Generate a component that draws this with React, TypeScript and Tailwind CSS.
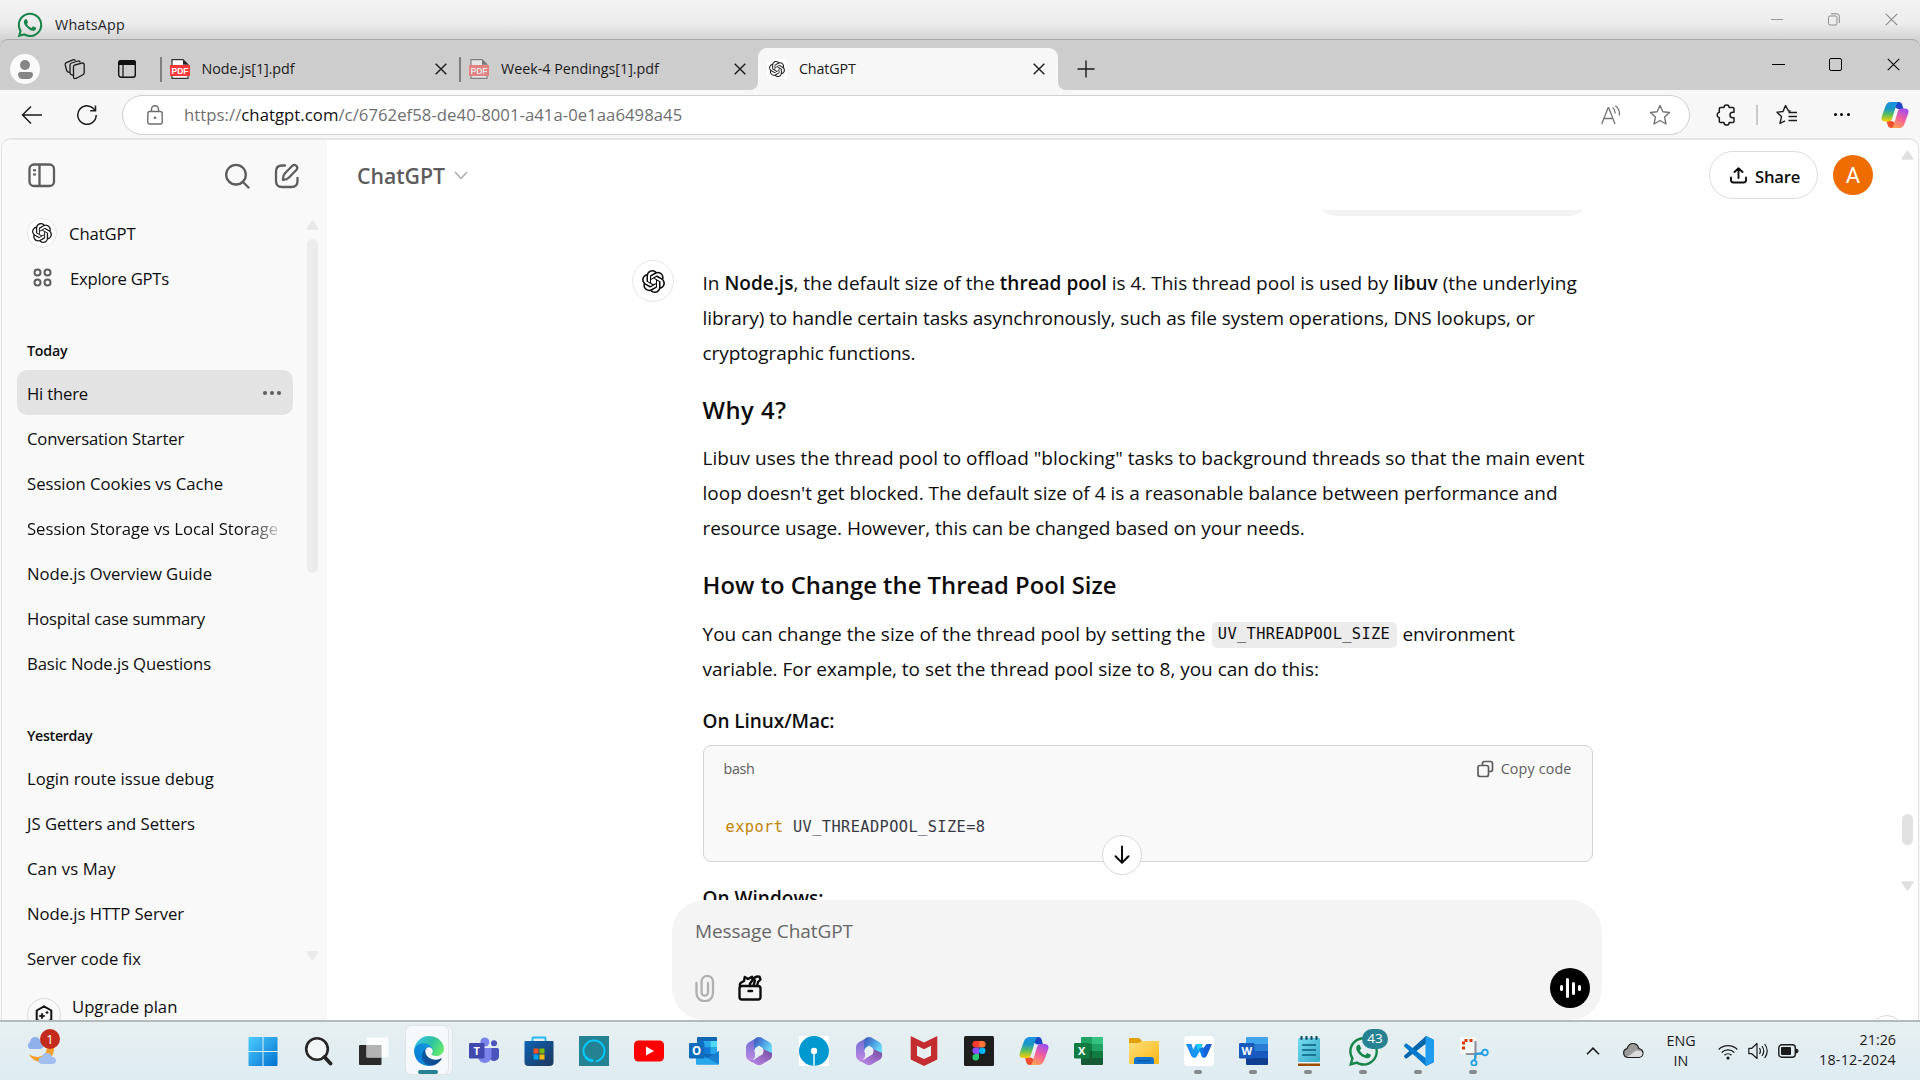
import type { ReactNode } from "react";
import { SiOpenai } from "react-icons/si";
import { FaWhatsapp } from "react-icons/fa";

/* Text run on one line */
function T({ c = "", children }: { c?: string; children: ReactNode }) {
  return <span className={"inline-block whitespace-nowrap " + c}>{children}</span>;
}

function Close({ c = "", s = 1 }: { c?: string; s?: number }) {
  return (
    <svg viewBox="0 0 12 12" className={"shrink-0 " + c} fill="none" stroke="currentColor" strokeWidth={s}>
      <path d="M.7.7l10.6 10.6M11.3.7L.7 11.3" />
    </svg>
  );
}

function Pdf({ c = "" }: { c?: string }) {
  return (
    <svg width="20" height="20" viewBox="0 0 20 20" className={"shrink-0 " + c}>
      <path d="M2 .7h11l5 5v13.6H2z" fill="#fff" stroke="#333" strokeWidth="1.2" />
      <path d="M13 .7v5h5z" fill="#222" />
      <rect x="0" y="6" width="20" height="11" fill="#fb3838" />
      <text x="10" y="14.600" fontSize="8.500" fontWeight="700" fill="#fff" textAnchor="middle" fontFamily="Liberation Sans, sans-serif">PDF</text>
    </svg>
  );
}

function Copilot({ id, size }: { id: string; size: number }) {
  return (
    <svg width={size} height={size} viewBox="0 0 30 30" className="shrink-0">
      <defs>
        <linearGradient id={id + "a"} x1="0" y1="0" x2="0" y2="1">
          <stop offset="0" stopColor="#1c8fe0" />
          <stop offset=".35" stopColor="#1899c8" />
          <stop offset=".65" stopColor="#5fbf5a" />
          <stop offset="1" stopColor="#ffd000" />
        </linearGradient>
        <linearGradient id={id + "b"} x1=".7" y1="0" x2=".3" y2="1">
          <stop offset="0" stopColor="#a04cf0" />
          <stop offset=".5" stopColor="#f4609c" />
          <stop offset="1" stopColor="#ffa052" />
        </linearGradient>
      </defs>
      <path d="M12 1h7.500q2.500 0 3.300 3l1.200 4.500h-6L14 6z" fill="#1d49c9" />
      <path d="M18 29h-7.500q-2.500 0-3.300-3L6 21.500h6L16 24z" fill="#f0502f" />
      <path d="M19 1h-8.500C7.300 1 5.600 3.200 4.700 6L.9 16.600C-.4 20.400 1.500 22 4.400 22h3.700c2.100 0 3.300-1.300 4-3.400l3.900-13C16.800 3 17.300 1.400 19 1z" fill={`url(#${id}a)`} />
      <path d="M11 29h8.500c3.200 0 4.900-2.200 5.800-5l3.800-10.600C30.400 9.600 28.500 8 25.600 8h-3.700c-2.100 0-3.300 1.300-4 3.400l-3.900 13c-.8 2.600-1.300 4.200-3 4.600z" fill={`url(#${id}b)`} />
    </svg>
  );
}

function WindowsLogo() {
  return (
    <svg width="30" height="30" viewBox="0 0 30 30" className="relative left-[-1px]">
      <defs>
        <linearGradient id="wn" gradientUnits="userSpaceOnUse" x1="0" y1="0" x2="30" y2="30">
          <stop offset="0" stopColor="#4fd0ff" />
          <stop offset="1" stopColor="#006fd0" />
        </linearGradient>
      </defs>
      <path d="M.5 2q0-1 1-1h13v14H.5zM15.500 1h13q1 0 1 1v13h-14zM.5 16h14v14h-13q-1 0-1-1zM15.500 16h14v13q0 1-1 1h-13z" fill="url(#wn)" />
    </svg>
  );
}
function SearchTask() {
  return (
    <svg width="30" height="30" viewBox="0 0 30 30" fill="none" stroke="#262626">
      <circle cx="13" cy="13" r="10.800" strokeWidth="2.600" fill="#f3f6f7" />
      <path d="M20.500 21l6 6.500" strokeWidth="3.800" strokeLinecap="round" />
    </svg>
  );
}
function TaskView() {
  return (
    <svg width="30" height="30" viewBox="0 0 30 30">
      <rect x="0" y="9" width="22.500" height="20" rx="1" fill="#2a2a2a" />
      <rect x="7.500" y="1.500" width="22" height="20" rx="1" fill="#fff" opacity=".85" />
      <rect x="7.500" y="9" width="15" height="12.500" fill="#b3b3b3" />
    </svg>
  );
}
function EdgeLogo() {
  return (
    <svg width="30" height="30" viewBox="4 4 257 257">
      <defs>
        <linearGradient id="e1" x1="0" y1="0" x2="1" y2="0"><stop offset="0" stopColor="#0c59a4" /><stop offset="1" stopColor="#114a8b" /></linearGradient>
        <linearGradient id="e2" x1="1" y1="0" x2="0" y2="1"><stop offset="0" stopColor="#1b9de2" /><stop offset="1" stopColor="#0078d4" /></linearGradient>
        <linearGradient id="e3" x1="0" y1=".2" x2="1" y2=".6"><stop offset="0" stopColor="#35c1f1" /><stop offset=".55" stopColor="#2dc3a0" /><stop offset="1" stopColor="#66eb6e" /></linearGradient>
      </defs>
      <path d="M235.680 195.460a93.730 93.730 0 01-10.540 4.710 101.870 101.870 0 01-35.900 6.460c-47.320 0-88.540-32.550-88.540-74.320A31.480 31.480 0 01117.130 105c-42.800 1.800-53.800 46.400-53.800 72.530 0 73.880 68.090 81.370 82.760 81.370 7.910 0 19.840-2.300 27-4.560l1.310-.44A128.340 128.340 0 00241.020 201.100a4 4 0 00-5.340-5.640z" fill="url(#e1)" />
      <path d="M110.340 246.340A79.200 79.200 0 0187.600 225a80.720 80.720 0 0129.530-120c3.120-1.470 8.450-4.130 15.540-4a32.350 32.350 0 0125.690 13 31.880 31.880 0 016.360 18.660c0-.21 24.460-79.600-80-79.600-43.900 0-80 41.660-80 78.210a130.150 130.150 0 0012.110 56 128 128 0 00156.380 67.110 75.550 75.550 0 01-62.780-8z" fill="url(#e2)" />
      <path d="M156.940 153.780c-.81 1.050-3.300 2.500-3.300 5.660 0 2.610 1.700 5.120 4.720 7.230 14.380 10 41.490 8.680 41.560 8.680a59.560 59.560 0 0030.270-8.350 61.380 61.380 0 0030.430-52.880c.26-22.410-8-37.310-11.340-43.910-21.190-41.450-66.930-65.290-116.670-65.290a128 128 0 00-128 126.200c.48-36.540 36.800-66.050 80-66.050 3.500 0 23.460.34 42 10.070 16.340 8.580 24.900 18.940 30.850 29.210 6.180 10.670 7.280 24.150 7.280 29.520s-2.740 13.330-7.800 19.910z" fill="url(#e3)" />
    </svg>
  );
}
function Teams() {
  return (
    <svg width="30" height="30" viewBox="0 0 30 30">
      <circle cx="25" cy="7.200" r="3" fill="#4b53bc" />
      <path d="M20 12h8.500q1.500 0 1.500 1.500V20a5 5 0 0 1-9 3z" fill="#4b53bc" />
      <circle cx="15.800" cy="6" r="4.500" fill="#7b83eb" />
      <path d="M9 12h13.500V21a6.800 6.800 0 0 1-13.500 0z" fill="#7b83eb" />
      <rect x="0" y="7" width="15.500" height="15.500" rx="1.300" fill="#4149b0" />
      <text x="7.700" y="18.600" fontSize="11" fontWeight="700" fill="#fff" textAnchor="middle" fontFamily="Open Sans, sans-serif">T</text>
    </svg>
  );
}
function Store() {
  return (
    <svg width="30" height="30" viewBox="0 0 30 30">
      <defs><linearGradient id="st" x1="0" y1="0" x2="1" y2="1"><stop offset="0" stopColor="#0c63b4" /><stop offset="1" stopColor="#1f355c" /></linearGradient></defs>
      <path d="M8.500 6V2q0-.5.500-.5h12q.5 0 .5.500v4" fill="none" stroke="#22b8f0" strokeWidth="1.800" />
      <path d="M.5 6q0-1 1-1h27q1 0 1 1v20q0 4-4 4h-21q-4 0-4-4z" fill="url(#st)" />
      <path d="M9.500 12.500h5v5h-5z" fill="#f25022" /><path d="M15.500 12.500h5v5h-5z" fill="#7fba00" />
      <path d="M9.500 18.500h5v5h-5z" fill="#00a4ef" /><path d="M15.500 18.500h5v5h-5z" fill="#ffb900" />
    </svg>
  );
}
function Alexa() {
  return (
    <svg width="30" height="30" viewBox="0 0 30 30">
      <rect width="30" height="30" fill="#258292" />
      <path d="M13.200 25.300a10.500 10.500 0 1 1 3.600 0" fill="none" stroke="#00caff" strokeWidth="2" />
      <path d="M5 17.500q2 5.500 8.600 6.500v2" fill="none" stroke="#00caff" strokeWidth="1.400" />
    </svg>
  );
}
function YouTube() {
  return (
    <svg width="30" height="30" viewBox="0 0 30 30">
      <rect x="0" y="4.500" width="30" height="21" rx="4.500" fill="#f00" />
      <path d="M12 10.500v9l8-4.500z" fill="#fff" />
    </svg>
  );
}
function Outlook() {
  return (
    <svg width="30" height="30" viewBox="0 0 30 30">
      <rect x="8" y="1" width="20" height="22" rx="1" fill="#1066b5" />
      <path d="M8 5h6.700v6.500H8z" fill="#1474c4" /><path d="M14.700 5h6.700v6.500h-6.700z" fill="#28a8ea" /><path d="M21.400 5H28v6.500h-6.600z" fill="#50d9ff" />
      <path d="M14.700 11.500h6.700V18h-6.700z" fill="#0f78d4" /><path d="M21.400 11.500H28V18h-6.600z" fill="#28a8ea" />
      <path d="M7 16l12 6 11-7v12.500q0 1-1 1H8q-1 0-1-1z" fill="#1490df" />
      <path d="M19 22l11 6.500V15z" fill="#1a7fce" />
      <path d="M7 22l12 .5 10.500 6H8q-1 0-1-1z" fill="#28a8ea" />
      <rect x="0" y="7" width="15.500" height="15.500" rx="1.300" fill="#0f6cbd" />
      <text x="7.700" y="18.700" fontSize="11.500" fontWeight="700" fill="#fff" textAnchor="middle" fontFamily="Open Sans, sans-serif">O</text>
    </svg>
  );
}
function M365({ id }: { id: string }) {
  return (
    <svg width="30" height="30" viewBox="0 0 30 30">
      <defs>
        <linearGradient id={id + "1"} x1="0" y1="0" x2="0" y2="1"><stop offset="0" stopColor="#6a6fd0" /><stop offset="1" stopColor="#c48ae6" /></linearGradient>
        <linearGradient id={id + "2"} x1="0" y1="0" x2="1" y2=".6"><stop offset="0" stopColor="#4053b4" /><stop offset=".5" stopColor="#4a93e0" /><stop offset="1" stopColor="#6adcf8" /></linearGradient>
        <linearGradient id={id + "3"} x1="0" y1="1" x2="1" y2="0"><stop offset="0" stopColor="#c18df0" /><stop offset="1" stopColor="#74499f" /></linearGradient>
      </defs>
      <path d="M12 2.200L4.500 6.500Q2 8 2 11v9q0 2.500 2 3.700L7.500 26 11 21V11z" fill={`url(#${id}1)`} />
      <path d="M12.500 1.600q2.500-1.300 5 0l8 4.600Q28 7.800 28 10.500V18l-9-5-4-3.500L10 14V6q0-3 2.500-4.400z" fill={`url(#${id}2)`} />
      <path d="M19 13l9 4v3q0 2.300-2 3.500l-8.500 5q-2.500 1.300-5 0L4 23.700q4.500 1.500 7.500-1L18.500 18z" fill={`url(#${id}3)`} />
      <circle cx="15" cy="15" r="4.600" fill="#e6eff3" />
    </svg>
  );
}
function Sbi() {
  return (
    <svg width="30" height="30" viewBox="0 0 30 30">
      <rect width="30" height="30" fill="#fff" />
      <circle cx="15" cy="15" r="15" fill="#0099cf" />
      <circle cx="15" cy="15" r="3.200" fill="#fff" />
      <path d="M14.300 15h1.400v15h-1.400z" fill="#fff" />
    </svg>
  );
}
function McAfee() {
  return (
    <svg width="30" height="30" viewBox="0 0 30 30">
      <path d="M1.700 0L15 6.500 28.300 0v23.500L15 30 1.700 23.500z" fill="#c42d2f" />
      <path d="M8 9.800l7 3.500 7-3.500v10L15 23l-7-3.300z" fill="#e8eff1" />
    </svg>
  );
}
function Figma() {
  return (
    <svg width="30" height="30" viewBox="0 0 30 30">
      <rect width="30" height="30" rx="1.500" fill="#1e1e1e" />
      <path d="M15 5h-3.300a3.250 3.250 0 0 0 0 6.500H15z" fill="#ff3b30" />
      <path d="M15 5h3.300a3.250 3.250 0 0 1 0 6.500H15z" fill="#ff7237" />
      <path d="M15 11.500h-3.300a3.250 3.250 0 0 0 0 6.500H15z" fill="#874fff" />
      <circle cx="18.250" cy="14.800" r="3.250" fill="#00b6ff" />
      <path d="M15 18h-3.300A3.250 3.250 0 1 0 15 21.300z" fill="#24cb71" />
    </svg>
  );
}
function Word() {
  return (
    <svg width="30" height="30" viewBox="0 0 30 30">
      <path d="M7 2q0-1 1-1h20q1 0 1 1v6H7z" fill="#41a5ee" />
      <path d="M7 8h22v7H7z" fill="#2b7cd3" />
      <path d="M7 15h22v7H7z" fill="#185abd" />
      <path d="M7 22h22v6q0 1-1 1H8q-1 0-1-1z" fill="#103f91" />
      <rect x="0" y="7" width="15.500" height="15.500" rx="1.300" fill="#185abd" />
      <text x="7.700" y="18.600" fontSize="11" fontWeight="700" fill="#fff" textAnchor="middle" fontFamily="Open Sans, sans-serif">W</text>
    </svg>
  );
}
function Excel() {
  return (
    <svg width="30" height="30" viewBox="0 0 30 30">
      <path d="M7 2q0-1 1-1h10v7H7z" fill="#21a366" /><path d="M18 1h10q1 0 1 1v6H18z" fill="#33c481" />
      <path d="M7 8h11v7H7z" fill="#107c41" /><path d="M18 8h11v7H18z" fill="#21a366" />
      <path d="M7 15h11v7H7z" fill="#185c37" /><path d="M18 15h11v7H18z" fill="#107c41" />
      <path d="M7 22h22v6q0 1-1 1H8q-1 0-1-1z" fill="#185c37" />
      <rect x="0" y="7" width="15.500" height="15.500" rx="1.300" fill="#107c41" />
      <text x="7.700" y="18.600" fontSize="11" fontWeight="700" fill="#fff" textAnchor="middle" fontFamily="Open Sans, sans-serif">X</text>
    </svg>
  );
}
function Explorer() {
  return (
    <svg width="30" height="30" viewBox="0 0 30 30">
      <defs><linearGradient id="fx" x1="0" y1="0" x2="1" y2="1"><stop offset="0" stopColor="#ffe07a" /><stop offset="1" stopColor="#fcb714" /></linearGradient></defs>
      <path d="M0 3q0-1 1-1h8.500q.7 0 1.200.5L13 5h15q1.500 0 1.500 1.500V12H0z" fill="#e0a10c" />
      <path d="M0 8q0-1 1-1h9l3-2h16q1 0 1 1v21q0 1-1 1H1q-1 0-1-1z" fill="url(#fx)" />
      <path d="M5 28v-4q0-3 3-3h14q3 0 3 3v4z" fill="#1273cc" />
      <path d="M8.500 24.800h13" stroke="#0a4d9b" strokeWidth="1" />
    </svg>
  );
}
function WShare() {
  return (
    <svg width="30" height="30" viewBox="0 0 30 30">
      <rect width="30" height="30" rx="4" fill="#fff" />
      <path d="M2 8h5.500l4 13.500H9.500q-1.700 0-2.300-1.700z" fill="#1d8ef5" />
      <path d="M8.500 15L12 8h6.500l-2.500 7-4 6.500H9.500z" fill="#1696f5" />
      <path d="M12 8h6.500l-1.500 5.500-3 1.500z" fill="#1fc8ff" />
      <path d="M28 8h-5.500l-5 6.500 1.500 7h1.500q1.700 0 2.300-1.700z" fill="#1760d8" />
      <path d="M15 13l4-2 1.500 10.500h-1q-1.500 0-2-1.500z" fill="#0b78e8" />
    </svg>
  );
}
function Notepad() {
  return (
    <svg width="30" height="30" viewBox="0 0 30 30">
      <defs><linearGradient id="np" x1="0" y1="0" x2="1" y2="1"><stop offset="0" stopColor="#74dcf2" /><stop offset="1" stopColor="#37a9c6" /></linearGradient></defs>
      <rect x="4" y="26" width="22" height="4" fill="#9a4d00" />
      <rect x="4" y="25" width="22" height="2.500" fill="#f4f4f4" />
      <rect x="4" y="2" width="22" height="24" rx="1" fill="url(#np)" />
      <path d="M8 9h14M8 14h14M8 19h14" stroke="#0b5f7d" strokeWidth="1.500" />
      <path d="M7.500 1v2M12.500 1v2M17.500 1v2M22.500 1v2" stroke="#134a60" strokeWidth="2.200" strokeLinecap="round" />
    </svg>
  );
}
function VsCode() {
  return (
    <svg width="30" height="30" viewBox="0 0 30 30">
      <path d="M22 0l6.800 3.200q1.200.6 1.200 2v4L21.500 8 3 22.300q-.8.600-1.600-.1L.3 21q-.7-.8 0-1.600z" fill="#0065a9" />
      <path d="M22 30l6.800-3.200q1.200-.6 1.200-2v-4L21.500 22 3 7.700q-.8-.6-1.600.1L.3 9q-.7.800 0 1.600z" fill="#007acc" />
      <path d="M22 0l6.800 3.200q1.200.6 1.200 2v19.600q0 1.400-1.200 2L22 30q-1 0-.5-1V1q-.500-1 .5-1z" fill="#1f9cf0" />
    </svg>
  );
}
function Snip() {
  return (
    <svg width="30" height="30" viewBox="0 0 30 30">
      <rect x="1" y="1" width="17" height="17" rx="2" fill="#fff" opacity=".6" />
      <path d="M13.500 4.500H4.500V14.500" fill="none" stroke="#d83b01" strokeWidth="3" strokeDasharray="3 2" />
      <path d="M16.500 5v18M7 18h16" stroke="#8f9499" strokeWidth="2.200" />
      <circle cx="26" cy="16.500" r="2.800" fill="none" stroke="#1ea0ea" strokeWidth="1.800" />
      <circle cx="15" cy="27" r="2.600" fill="none" stroke="#1ea0ea" strokeWidth="1.800" />
      <path d="M16 18l7.500-1M16.500 18l-1 6.500" stroke="#1ea0ea" strokeWidth="1.800" />
    </svg>
  );
}

const apps: { icon: ReactNode; open?: boolean; active?: boolean; badge?: string }[] = [
  { icon: <WindowsLogo /> },
  { icon: <SearchTask /> },
  { icon: <TaskView /> },
  { icon: <EdgeLogo />, active: true },
  { icon: <Teams /> },
  { icon: <Store /> },
  { icon: <Alexa /> },
  { icon: <YouTube /> },
  { icon: <Outlook /> },
  { icon: <M365 id="m" /> },
  { icon: <Sbi /> },
  { icon: <M365 id="n" /> },
  { icon: <McAfee /> },
  { icon: <Figma /> },
  { icon: <Copilot id="ct" size={30} /> },
  { icon: <Excel /> },
  { icon: <Explorer /> },
  { icon: <WShare />, open: true },
  { icon: <Word />, open: true },
  { icon: <Notepad />, open: true },
  { icon: <FaWhatsapp size={33} color="#15854a" />, open: true, badge: "43" },
  { icon: <VsCode />, open: true },
  { icon: <Snip />, open: true },
];

const today: [string, string][] = [
  ["Hi there", "tracking-[-0.2px]"],
  ["Conversation Starter", "tracking-[-0.18px]"],
  ["Session Cookies vs Cache", "tracking-[-0.02px]"],
  ["Session Storage vs Local Storage", "tracking-[-0.03px] bg-linear-to-r from-[#0d0d0d] from-88% to-[#cfcfcf] bg-clip-text text-transparent"],
  ["Node.js Overview Guide", "tracking-[-0.04px]"],
  ["Hospital case summary", "tracking-[-0.14px]"],
  ["Basic Node.js Questions", "tracking-[-0.11px]"],
];
const yesterday: [string, string][] = [
  ["Login route issue debug", "tracking-[0.02px]"],
  ["JS Getters and Setters", "tracking-[-0.02px]"],
  ["Can vs May", "tracking-[0.1px]"],
  ["Node.js HTTP Server", "tracking-[-0.05px]"],
  ["Server code fix", "tracking-[-0.05px]"],
];

function Triangle({ down, c = "" }: { down?: boolean; c?: string }) {
  return (
    <svg width="13" height="10" viewBox="0 0 13 10" className={c + (down ? " rotate-180" : "")}>
      <path d="M1.500 8.800L6.500 1.500l5 7.300z" fill="currentColor" stroke="currentColor" strokeWidth="2" strokeLinejoin="round" />
    </svg>
  );
}

function TitleBar() {
  return (
    <div className="flex h-[39px] items-center bg-linear-to-b from-[#f3f3f3] via-[#ececec] via-60% to-[#d4d4d4] pt-[10px]">
      <FaWhatsapp size={28} color="#15854a" className="ml-[16px] shrink-0" />
      <T c="ml-[11px] mt-px text-[14.3px] tracking-[0.2px] text-[#1f1f1f]">WhatsApp</T>
      <div className="ml-auto mr-[22px] mt-[-10px] flex items-center text-[#8b8b8b]">
        <div className="h-px w-3 bg-[#9a9a9a]" />
        <svg width="12" height="13" viewBox="0 0 12 13" className="ml-[45px]" fill="none" stroke="currentColor">
          <rect x=".5" y="3" width="8.500" height="9" rx="1.500" />
          <path d="M3 .8h6q2.300 0 2.300 2.300V10" />
        </svg>
        <Close c="ml-[45px] size-[13px]" />
      </div>
    </div>
  );
}

function TabStrip() {
  return (
    <div className="flex h-[51px] items-center rounded-t-[8px] border-t border-[#a9a9a9] bg-[#cdcdcd] pt-[8px] text-[14.3px] text-[#1b1b1b]">
      <div className="ml-[10px] flex size-[30px] flex-col items-center justify-center gap-[2px] rounded-full bg-[#fafafa]">
        <div className="size-[10px] rounded-full bg-[#868686]" />
        <div className="h-[7px] w-[15px] rounded-[4px_4px_7px_7px] bg-[#868686]" />
      </div>
      <svg width="22" height="22" viewBox="0 0 22 22" className="ml-[24px]" fill="none" stroke="#1b1b1b" strokeWidth="1.300" strokeLinejoin="round">
        <path d="M9.500 8.700q0-1.300 1.300-1.700l7-1.900q2-.4 2.400 1.400v8.200q0 1.500-1.300 2l-6.400 3.500q-3 1.200-3-1.200z" />
        <path d="M9.500 17.500l-1.500-.6q-2-.7-2-2.200V7.200Q6 5.500 7.600 5L14 3q1.700-.3 2.300 1.500" />
        <path d="M6 14.700l-1.500-.5q-1.500-.6-1.900-2L1.200 6.900Q1 5.300 2.300 4.700L9 1.800q1.500-.500 2.500.8" />
      </svg>
      <svg width="20" height="20" viewBox="0 0 20 20" className="ml-[31px]">
        <rect x="1.700" y="1.700" width="16.600" height="16.600" rx="2.500" fill="none" stroke="#111" strokeWidth="1.400" />
        <path d="M1 3.500Q1 1 3.500 1h13Q19 1 19 3.500V6H1z" fill="#111" />
        <path d="M6 6v12" stroke="#111" strokeWidth="1.200" />
      </svg>
      <div className="ml-[23px] h-[25px] w-[1.5px] bg-[#7f7f7f]" />
      <Pdf c="ml-[8px]" />
      <T c="ml-[12px] tracking-[-0.07px]">Node.js[1].pdf</T>
      <div className="flex w-[153px] justify-end"><Close s={1.400} c="size-[12px]" /></div>
      <div className="ml-[12px] h-[25px] w-[1.5px] bg-[#7f7f7f]" />
      <Pdf c="ml-[8px] opacity-50" />
      <T c="ml-[12px]">Week-4 Pendings[1].pdf</T>
      <div className="flex w-[87px] justify-end"><Close s={1.400} c="size-[12px]" /></div>
      <div className="relative ml-[12px] flex h-[42px] w-[300px] items-center rounded-t-[9px] bg-[#f7f7f7]">
        <svg width="8" height="8" viewBox="0 0 8 8" className="absolute bottom-0 left-[-8px]"><path d="M8 0v8H0a8 8 0 0 0 8-8z" fill="#f7f7f7" /></svg>
        <svg width="8" height="8" viewBox="0 0 8 8" className="absolute bottom-0 right-[-8px]"><path d="M0 0v8h8a8 8 0 0 1-8-8z" fill="#f7f7f7" /></svg>
        <div className="ml-[9px] flex size-[20px] items-center justify-center rounded-[4px] bg-white"><SiOpenai size={16} color="#222" /></div>
        <T c="ml-[12px] tracking-[-0.1px]">ChatGPT</T>
        <Close s={1.400} c="ml-auto mr-[13px] size-[12px]" />
      </div>
      <svg width="18" height="18" viewBox="0 0 18 18" className="ml-[19px]" stroke="#1b1b1b" strokeWidth="1.400"><path d="M9 .5v17M.5 9h17" /></svg>
      <div className="ml-auto mr-[20px] mt-[-9px] flex items-center text-black">
        <div className="h-[1.5px] w-[13px] bg-black" />
        <div className="ml-[44px] size-[13px] rounded-[2px] border-[1.3px] border-black" />
        <Close c="ml-[45px] size-[13px]" />
      </div>
    </div>
  );
}

function Toolbar() {
  return (
    <div className="flex h-[49px] items-center bg-[#f7f7f7] text-[#1b1b1b]">
      <svg width="22" height="20" viewBox="0 0 22 20" className="ml-[21px]" fill="none" stroke="currentColor" strokeWidth="1.500"><path d="M21 10H1.500M10 1.500L1.500 10l8.500 8.500" /></svg>
      <svg width="22" height="22" viewBox="0 0 22 22" className="ml-[33px]" fill="none" stroke="currentColor" strokeWidth="1.500"><path d="M19 6.500A9.200 9.200 0 1 0 20.200 11M19.500 1.500v5.300h-5.300" /></svg>
      <div className="ml-[24px] flex h-[40px] w-[1568px] items-center rounded-full border border-[#cfcfcf] bg-white">
        <svg width="16" height="20" viewBox="0 0 16 20" className="ml-[24px]" fill="none" stroke="#6e6e6e" strokeWidth="1.400">
          <rect x=".8" y="6.500" width="14.400" height="12.500" rx="2" />
          <path d="M4.500 6.500V4.300a3.500 3.500 0 0 1 7 0v2.200" />
          <circle cx="8" cy="12.800" r="1.300" fill="#6e6e6e" stroke="none" />
        </svg>
        <T c="ml-[21px] text-[16.7px] tracking-[0.05px] text-[#6f6f6f]">
          https://<span className="text-[#101010]">chatgpt.com</span>/c/6762ef58-de40-8001-a41a-0e1aa6498a45
        </T>
        <div className="ml-auto mr-[18px] flex items-center">
          <svg width="20" height="20" viewBox="0 0 20 20" fill="none" stroke="#757575" strokeWidth="1.300">
            <path d="M.7 19L7 3h.8L14 19M3 13.500h9M11.500 2.500q3 2 2.500 6M14.300.7q5 3.800 4 9.800" />
          </svg>
          <svg width="22" height="22" viewBox="0 0 22 22" className="ml-[28px]" fill="none" stroke="#757575" strokeWidth="1.400" strokeLinejoin="round">
            <path d="M11 1.500l2.900 6.200 6.700.8-5 4.600 1.400 6.900-6-3.500L5 20l1.400-6.900-5-4.600 6.700-.8z" />
          </svg>
        </div>
      </div>
      <svg width="22" height="24" viewBox="0 0 22 24" className="ml-[26px]" fill="none" stroke="currentColor" strokeWidth="1.500" strokeLinejoin="round">
        <path d="M4.500 4.500H8a2.600 2.600 0 0 1 5.200 0h3.600q1.200 0 1.200 1.200v3.500h-1.200a2.800 2.800 0 0 0 0 5.600H18v3.500q0 1.200-1.200 1.200h-3.600a2.600 2.600 0 0 1-5.200 0H4.500q-1.200 0-1.200-1.200v-3.500a2.900 2.900 0 0 1 0-5.600V5.700q0-1.200 1.200-1.200z" />
      </svg>
      <div className="ml-[18px] h-[20px] w-[1.5px] bg-[#cacaca]" />
      <svg width="22" height="22" viewBox="0 0 22 22" className="ml-[18px]" fill="none" stroke="currentColor" strokeWidth="1.400" strokeLinejoin="round">
        <path d="M14.500 7l-2-.2L9.500 1.500 7 7.500l-6 .8 4.500 4.300L4 19.500 9 16.800M12.500 8.500h8.500M12.500 12.500h8.500M12.500 16.500h8.500" />
      </svg>
      <div className="ml-[36px] flex gap-[3.5px]">
        <div className="size-[3px] rounded-full bg-black" /><div className="size-[3px] rounded-full bg-black" /><div className="size-[3px] rounded-full bg-black" />
      </div>
      <div className="ml-auto mr-[11px]"><Copilot id="cp" size={28} /></div>
    </div>
  );
}

function Row({ t, c, sel }: { t: string; c: string; sel?: boolean }) {
  return (
    <div className={"flex h-[45px] w-[276px] shrink-0 items-center rounded-[10px] pl-[10px] pr-[12px] " + (sel ? "bg-[#e3e3e3]" : "")}>
      <T c={"mt-[2px] " + c}>{t}</T>
      {sel && (
        <div className="ml-auto flex gap-[3px]">
          <div className="size-[4px] rounded-full bg-[#5d5d5d]" /><div className="size-[4px] rounded-full bg-[#5d5d5d]" /><div className="size-[4px] rounded-full bg-[#5d5d5d]" />
        </div>
      )}
    </div>
  );
}

function Sidebar() {
  return (
    <div className="flex w-[325px] shrink-0 flex-col overflow-hidden bg-[#f9f9f9] text-[16.7px] text-[#0d0d0d]">
      <div className="flex h-[70px] shrink-0 items-center pl-[26px] pt-px text-[#5d5d5d]">
        <svg width="28" height="26" viewBox="0 0 28 26" fill="none" stroke="currentColor" strokeWidth="2.300">
          <rect x="1.500" y="1.500" width="24.500" height="21.500" rx="4.500" />
          <path d="M11.500 1.500V23" /><path d="M5 7.200h3M5 11.500h3" strokeWidth="2" />
        </svg>
        <svg width="26" height="26" viewBox="0 0 26 26" className="ml-[168px]" fill="none" stroke="currentColor" strokeWidth="2.300" strokeLinecap="round">
          <circle cx="12" cy="11.700" r="9.800" /><path d="M19 19l5.500 5.500" />
        </svg>
        <svg width="26" height="26" viewBox="0 0 26 26" className="ml-[24px]" fill="none" stroke="currentColor" strokeWidth="2.300" strokeLinecap="round" strokeLinejoin="round">
          <path d="M11 2.500H8Q2 2.500 2 8.500V18q0 6 6 6h9.500q6 0 6-6v-3" />
          <path d="M9 16.800q-.3-4 2-6.500l7.300-7.500q2-1.800 4 0t0 4.200L15 14.500q-2.500 2.500-6 2.300z" />
        </svg>
      </div>
      <div className="flex grow">
        <div className="flex w-[303px] flex-col pl-[15px]">
          <div className="flex h-[45px] items-center pl-[10px]">
            <div className="flex size-[30px] items-center justify-center rounded-full border border-[#e6e6e6] bg-white"><SiOpenai size={20} color="#1a1a1a" /></div>
            <T c="ml-[12px] mt-[2px] tracking-[-0.1px]">ChatGPT</T>
          </div>
          <div className="flex h-[45px] items-center pl-[16px]">
            <svg width="19" height="19" viewBox="0 0 19 19" fill="none" stroke="#5d5d5d" strokeWidth="2">
              <circle cx="4.500" cy="4.500" r="3" /><circle cx="14.500" cy="4.500" r="3" /><circle cx="4.500" cy="14.500" r="3" /><circle cx="14.500" cy="14.500" r="3" />
            </svg>
            <T c="ml-[18px] mt-[2px] tracking-[-0.28px]">Explore GPTs</T>
          </div>
          <div className="mt-[30px] flex h-[40px] items-center pl-[10px] pt-px text-[14.2px] font-semibold"><T c="tracking-[-0.2px]">Today</T></div>
          {today.map(([t, c], i) => <Row key={t} t={t} c={c} sel={i === 0} />)}
          <div className="mt-[30px] flex h-[40px] items-center pl-[10px] pt-px text-[14.2px] font-semibold"><T c="tracking-[-0.3px]">Yesterday</T></div>
          {yesterday.map(([t, c]) => <Row key={t} t={t} c={c} />)}
          <div className="mt-[18px] flex items-start pl-[10px]">
            <div className="flex size-[34px] items-center justify-center rounded-full border border-[#dcdcdc]">
              <svg width="18" height="20" viewBox="0 0 18 20" fill="none" stroke="#111" strokeWidth="2" strokeLinejoin="round">
                <path d="M9 1.300l7.300 4.200v9L9 18.700l-7.300-4.200v-9z" />
                <path d="M7 8l.8 2.200L10 11l-2.200.8L7 14l-.8-2.200L4 11l2.200-.8z" fill="#111" strokeWidth=".8" />
                <path d="M12 6v3M10.500 7.500h3" strokeWidth="1.200" />
              </svg>
            </div>
            <T c="ml-[11px] mt-[-4px]">Upgrade plan</T>
          </div>
        </div>
        <div className="flex w-[14px] flex-col items-center pt-[10px] text-[#e9e9e9]">
          <Triangle c="shrink-0" />
          <div className="mt-[9px] h-[334px] w-[11px] shrink-0 rounded-full bg-[#ececec]" />
          <div className="mt-[378px] shrink-0"><Triangle down /></div>
        </div>
      </div>
    </div>
  );
}

function Line({ c, children }: { c?: string; children: ReactNode }) {
  return <div className="h-[35px] leading-[35px]"><T c={c}>{children}</T></div>;
}

function Chat() {
  return (
    <div className="flex h-[690px] flex-col overflow-hidden">
      <div className="ml-[985px] mt-[-44px] h-[50px] w-[281px] shrink-0 rounded-[25px] bg-[#f3f3f3]" />
      <div className="flex pl-[305px] pt-[44px]">
        <div className="flex size-[42px] shrink-0 items-center justify-center rounded-full border border-[#e6e6e6]"><SiOpenai size={23} color="#0d0d0d" /></div>
        <div className="ml-[28.500px] w-[890px] pt-[6px] text-[19px] text-[#0d0d0d]">
          <Line>In <b className="font-semibold">Node.js</b>, the default size of the <b className="font-semibold">thread pool</b> is 4. This thread pool is used by <b className="font-semibold">libuv</b> (the underlying</Line>
          <Line c="tracking-[-0.08px]">library) to handle certain tasks asynchronously, such as file system operations, DNS lookups, or</Line>
          <Line c="tracking-[-0.06px]">cryptographic functions.</Line>
          <h3 className="mb-[11px] mt-[19px] h-[40px] text-[23.8px] font-semibold leading-[40px]"><T c="tracking-[0.5px]">Why 4?</T></h3>
          <Line c="tracking-[0.015px]">Libuv uses the thread pool to offload "blocking" tasks to background threads so that the main event</Line>
          <Line c="tracking-[-0.01px]">loop doesn't get blocked. The default size of 4 is a reasonable balance between performance and</Line>
          <Line c="tracking-[-0.05px]">resource usage. However, this can be changed based on your needs.</Line>
          <h3 className="mb-[11px] mt-[19px] h-[40px] text-[23.8px] font-semibold leading-[40px]"><T c="tracking-[0.02px]">How to Change the Thread Pool Size</T></h3>
          <div className="flex h-[36px] items-center">
            <T c="tracking-[0.03px]">You can change the size of the thread pool by setting the</T>
            <span className="ml-[6px] mt-px flex h-[26px] w-[185px] items-center justify-center rounded-[5px] bg-[#ececec] font-['DejaVu_Sans_Mono'] text-[15.3px]"><T c="tracking-[0.36px]">UV_THREADPOOL_SIZE</T></span>
            <T c="ml-[6px] tracking-[-0.19px]">environment</T>
          </div>
          <Line c="tracking-[-0.02px]">variable. For example, to set the thread pool size to 8, you can do this:</Line>
          <div className="mt-[17px] font-semibold"><Line c="tracking-[-0.06px]">On Linux/Mac:</Line></div>
          <div className="mt-[6px] h-[117px] rounded-[8px] border border-[#d3d3d3] bg-[#f9f9f9] px-[20px]">
            <div className="flex h-[46px] items-center text-[14.3px] text-[#5d5d5d]">
              <T c="tracking-[-0.3px]">bash</T>
              <svg width="17" height="18" viewBox="0 0 17 18" className="ml-auto" fill="none" stroke="#5d5d5d" strokeWidth="1.700">
                <rect x="1" y="5.500" width="10.500" height="11" rx="2" />
                <path d="M5.500 5.500V3.500q0-2 2-2h6q2 0 2 2v6q0 2-2 2h-2" />
              </svg>
              <T c="ml-[7px] tracking-[0.15px]">Copy code</T>
            </div>
            <div className="mt-[22px] pl-[2px] font-['DejaVu_Sans_Mono'] text-[15.3px] leading-[26px] text-[#383a42]"><T c="tracking-[0.42px]"><span className="text-[#c18401]">export</span> UV_THREADPOOL_SIZE=8</T></div>
          </div>
          <div className="mt-[19px] font-semibold"><Line c="tracking-[0.03px]">On Windows:</Line></div>
        </div>
      </div>
    </div>
  );
}

function Composer() {
  return (
    <div className="ml-[345px] flex h-[120px] w-[930px] flex-col rounded-[32px] bg-[#f4f4f4] pl-[23px] pr-[12px]">
      <div className="mt-[14px] h-[35px] text-[19px] leading-[35px] text-[#676767]"><T c="tracking-[-0.07px]">Message ChatGPT</T></div>
      <div className="mt-[19px] flex h-[40px] items-center">
        <svg width="20" height="28" viewBox="0 0 20 28" fill="none" stroke="#b0b0b0" strokeWidth="2.300" strokeLinecap="round">
          <path d="M1.500 9v10a8 8 0 0 0 16.500 0V7.500a5.700 5.700 0 0 0-11.400 0v11a3.200 3.200 0 0 0 6.400 0V9" />
        </svg>
        <svg width="26" height="28" viewBox="0 0 26 28" className="ml-[22px]" fill="none" stroke="#0d0d0d" strokeWidth="2.400" strokeLinejoin="round" strokeLinecap="round">
          <rect x="2.500" y="12" width="21" height="13.500" rx="2.500" />
          <path d="M11.500 17h3.500" />
          <path d="M3 12q-.5-2.500 1.300-3.500L7 7l.8-4L11 5l4-2.300.5 3.500L13 9.500V12M16.500 11.500L18 6.500 16.500 5q2-3.200 6-2.300L23.500 5.500 21 8l-1 4" />
        </svg>
        <div className="ml-auto flex size-[40px] items-center justify-center gap-[3px] rounded-full bg-black">
          <div className="h-[6px] w-[3px] rounded-full bg-white" /><div className="h-[20px] w-[3px] rounded-full bg-white" />
          <div className="h-[13px] w-[3px] rounded-full bg-white" /><div className="h-[6px] w-[3px] rounded-full bg-white" />
        </div>
      </div>
    </div>
  );
}

function Main() {
  return (
    <div className="relative flex grow flex-col overflow-hidden rounded-tr-[9px] bg-white">
      <div className="flex h-[70px] items-center pl-[30px]">
        <T c="mt-[2px] text-[21.3px] font-semibold tracking-[-0.06px] text-[#5d5d5d]">ChatGPT</T>
        <svg width="14" height="10" viewBox="0 0 14 10" className="ml-[9px] mt-[2px]" fill="none" stroke="#b4b4b4" strokeWidth="1.800" strokeLinecap="round"><path d="M1.500 1.500L7 7.500l5.500-6" /></svg>
        <div className="ml-auto mr-[15px] flex h-[48px] w-[109px] items-center rounded-full border border-[#dcdcdc] pl-[20px]">
          <svg width="17" height="17" viewBox="0 0 17 17" fill="none" stroke="#0d0d0d" strokeWidth="1.900" strokeLinecap="round" strokeLinejoin="round">
            <path d="M8.500 11V1.500M4.500 5l4-3.700 4 3.700M1 10.500V13q0 2.500 2.500 2.500h10Q16 15.500 16 13v-2.500" />
          </svg>
          <T c="ml-[8px] mt-[4px] text-[16.7px] font-semibold tracking-[-0.25px] text-[#0d0d0d]">Share</T>
        </div>
        <div className="mr-[45px] flex size-[40px] items-center justify-center rounded-full bg-[#ef6c00] font-['Roboto'] text-[22px] text-white">A</div>
      </div>
      <Chat />
      <Composer />
      <div className="absolute left-[775px] top-[695px] flex size-[40px] items-center justify-center rounded-full border border-[#d9d9d9] bg-white">
        <svg width="18" height="20" viewBox="0 0 18 20" fill="none" stroke="#0d0d0d" strokeWidth="2" strokeLinecap="round" strokeLinejoin="round"><path d="M9 1.500v16M2.500 11.300L9 17.800l6.500-6.500" /></svg>
      </div>
      <div className="absolute bottom-[-27px] right-[15px] size-[32px] rounded-full border border-[#d9d9d9]" />
      <div className="absolute right-[4px] top-[10px] flex w-[13px] flex-col items-center text-[#dfdfdf]">
        <Triangle />
        <div className="mt-[654px] h-[31px] w-[11px] rounded-full bg-[#e1e1e1]" />
        <div className="mt-[36px]"><Triangle down /></div>
      </div>
    </div>
  );
}

function Taskbar() {
  return (
    <div className="flex h-[60px] items-center border-t-2 border-[#b4bbbd] bg-linear-to-b from-[#e7eff1] to-[#deecf2] text-[14.3px] text-[#1b1b1b]">
      <div className="relative ml-[26px] h-[30px] w-[210px]">
        <svg width="32" height="32" viewBox="0 0 32 32">
          <path d="M27 8a12 12 0 0 1-24 10 12 10 0 0 0 9 3q8-1 9-9z" fill="#f3a02c" />
          <path d="M4 13a4 4 0 0 1 0-7q1-5 5-5t5.500 4q4 1 3 5-1 3-4 3z" fill="#8fb0ea" />
          <path d="M16 28a3.500 3.500 0 0 1 0-7q1-4 5-4t5 4q4 0 4 3.500t-4 3.500z" fill="#a3bff2" />
        </svg>
        <div className="absolute left-[14px] top-[-7px] flex size-[20px] items-center justify-center rounded-full bg-[#c42b1c] text-[13px] leading-none text-white">1</div>
      </div>
      {apps.map((a, i) => (
        <div key={i} className="relative flex h-[58px] w-[55px] items-center justify-center">
          {a.active && <div className="absolute left-[4px] top-[3px] h-[50px] w-[48px] rounded-[6px] border border-[#dfe5e8] bg-[#f1f5f8]" />}
          {a.active && <div className="absolute left-[4px] top-[3px] h-[50px] w-[44px] rounded-[6px] border border-[#dfe5e8] bg-[#f6f9fb]" />}
          <div className="relative">{a.icon}</div>
          {a.active && <div className="absolute bottom-[6px] left-[17px] h-[4px] w-[20px] rounded-full bg-[#258292]" />}
          {a.open && <div className="absolute bottom-[6px] left-[23px] h-[4px] w-[8px] rounded-full bg-[#868a8c]" />}
          {a.badge && <div className="absolute left-[26px] top-[7px] flex h-[20px] w-[26px] items-center justify-center rounded-full bg-[#258292] text-[13.5px] leading-none text-white">{a.badge}</div>}
        </div>
      ))}
      <svg width="14" height="8" viewBox="0 0 14 8" className="ml-[85px]" fill="none" stroke="#1b1b1b" strokeWidth="1.600"><path d="M1 7.200L7 1.200l6 6" /></svg>
      <svg width="22" height="18" viewBox="0 0 22 18" className="ml-[22px]">
        <path d="M5.500 15.500a4.500 4.500 0 0 1-.5-8.800Q6.500 1.500 11 1.500t5.800 5Q21 7.500 21 11t-4 4.500z" fill="#9b9b9b" stroke="#1b1b1b" strokeWidth="1.200" />
        <path d="M5.500 15L14 8.500q6.400 0 6.400 3T17 15z" fill="#dcdcdc" />
      </svg>
      <div className="ml-[22px] flex w-[30px] flex-col items-center leading-[20px]"><T>ENG</T><T>IN</T></div>
      <svg width="20" height="17" viewBox="0 0 20 17" className="ml-[22px]" fill="none" stroke="#1b1b1b" strokeWidth="1.300">
        <path d="M.7 6.500a13 13 0 0 1 18.600 0M3.700 9.500a9 9 0 0 1 12.600 0M6.500 12.300a5 5 0 0 1 7 0" /><circle cx="10" cy="15" r="1.600" fill="#1b1b1b" stroke="none" />
      </svg>
      <svg width="21" height="18" viewBox="0 0 21 18" className="ml-[10px]" fill="none" stroke="#1b1b1b" strokeWidth="1.200" strokeLinejoin="round">
        <path d="M.8 6.300h3L9 1.500v15l-5.200-4.800h-3zM11.500 6q1.800 3 0 6M14 4q3.500 5 0 10M16.700 2q5 7 0 14" />
      </svg>
      <svg width="21" height="14" viewBox="0 0 21 14" className="ml-[9px]">
        <rect x=".8" y=".8" width="16.500" height="12.400" rx="3" fill="none" stroke="#1b1b1b" strokeWidth="1.400" />
        <rect x="3" y="3" width="10" height="8" rx="1" fill="#1b1b1b" /><path d="M18.500 5q1.500.2 1.500 2t-1.500 2z" fill="#1b1b1b" stroke="#1b1b1b" />
      </svg>
      <div className="ml-auto mr-[24px] mt-[-2px] flex flex-col items-end leading-[20px]"><T>21:26</T><T c="tracking-[0.24px]">18-12-2024</T></div>
    </div>
  );
}

export default function App() {
  return (
    <div className="flex h-[1080px] w-[1920px] flex-col overflow-hidden bg-[#d4d4d4] font-['Open_Sans','Noto_Sans',sans-serif]">
      <TitleBar />
      <TabStrip />
      <Toolbar />
      <div className="h-[881px] bg-[#f7f7f7] px-[2px]">
        <div className="flex h-[881px] overflow-hidden rounded-t-[9px] border-t border-[#e6e6e6] shadow-[0_0_0_1px_#e3e3e3]">
          <Sidebar />
          <Main />
        </div>
      </div>
      <Taskbar />
    </div>
  );
}
